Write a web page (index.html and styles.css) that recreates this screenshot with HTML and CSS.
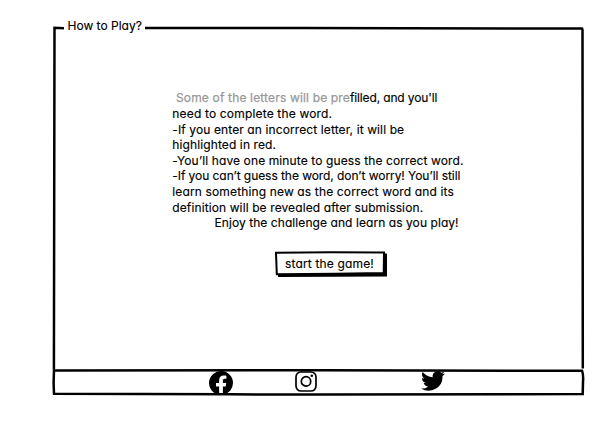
FILE: index.html
```
<!DOCTYPE html>
<html lang="en">
<head>
<meta charset="utf-8">
<title>How to Play?</title>
<link rel="stylesheet" href="styles.css">
</head>
<body>
<div class="window">
  <svg class="outline" viewBox="0 0 610 430" aria-hidden="true">
    <path d="M64 28.2L54.5 27.8L53.9 369.5M145 28L300 28.1L582 28.6Q582.7 28.6 582.5 34L582.8 368.5"/>
    <path d="M54 370.5L320 370.2L582 370.8Q583.6 374 583 382L582.7 394L320 394.6L230 394.3L54 393.8L53.6 383Z"/>
  </svg>
  <h1 class="title">How to Play?</h1>
  <main class="content">
    <div class="rules">
      <p class="l1"><span class="muted">Some of the letters will be pre</span>filled, and you'll</p>
      <p class="l2">need to complete the word.</p>
      <p class="l3">-If you enter an incorrect letter, it will be</p>
      <p class="l4">highlighted in red.</p>
      <p class="l5">-You’ll have one minute to guess the correct word.</p>
      <p class="l6">-If you can’t guess the word, don’t worry! You’ll still</p>
      <p class="l7">learn something new as the correct word and its</p>
      <p class="l8">definition will be revealed after submission.</p>
      <p class="l9">Enjoy the challenge and learn as you play!</p>
    </div>
    <button class="start" type="button">
      <svg class="start-shape" viewBox="0 0 113 27" aria-hidden="true">
        <path class="shadow" d="M3 3L112 2.5L112 25.5L3 26Z"/>
        <path class="face" d="M1 1.8L55 1.2L109 1.5L108.7 22L60 22.8L1.8 23.2Z"/>
      </svg>
      <span>start the game!</span>
    </button>
  </main>
  <footer class="social">
    <svg class="facebook" viewBox="0 0 24 24"><path d="M24 12A12 12 0 1 0 10.1 23.9V15.5H7V12h3.1V9.3c0-3 1.8-4.7 4.6-4.7 1.3 0 2.7.2 2.7.2v3h-1.5c-1.5 0-2 .9-2 1.9V12h3.3l-.5 3.5h-2.8v8.4A12 12 0 0 0 24 12Z"/></svg>
    <svg class="instagram" viewBox="0 0 22 22"><rect x="1" y="1" width="20" height="19" rx="5"/><circle cx="11" cy="10.4" r="4.7"/><circle class="dot" cx="16.8" cy="4.8" r="1.3"/></svg>
    <svg class="twitter" viewBox="0 0 24 20"><path d="M24 2.4a10 10 0 0 1-2.8.8A5 5 0 0 0 23.3.5a10 10 0 0 1-3.1 1.2A4.9 4.9 0 0 0 11.8 6.2 14 14 0 0 1 1.7 1a4.9 4.9 0 0 0 1.5 6.6A5 5 0 0 1 1 7v.1a4.9 4.9 0 0 0 3.9 4.8 5 5 0 0 1-2.2.1 4.9 4.9 0 0 0 4.6 3.4A10 10 0 0 1 0 17.5 14 14 0 0 0 21.5 5A10 10 0 0 0 24 2.4Z"/></svg>
  </footer>
</div>
</body>
</html>
```
FILE: styles.css
```
* { box-sizing: border-box; }
body {
  margin: 0;
  background: #fff;
  color: #000;
  font: 12px/15.6px Inter, "Liberation Sans", sans-serif;
  font-feature-settings: "cv11";
  -webkit-text-stroke: 0.15px currentColor;
}
.window {
  position: relative;
  width: 610px;
  height: 430px;
  padding: 18px 26px 35px 53px;
  display: flex;
  flex-direction: column;
}
.outline {
  position: absolute;
  inset: 0;
  width: 610px;
  height: 430px;
  fill: none;
  stroke: #000;
  stroke-width: 2.5;
}
.title {
  margin: 0 0 0 14.5px;
  font-size: 12px;
  font-weight: 400;
  line-height: 16px;
  letter-spacing: 0;
}
.content {
  height: 335px;
  padding: 56.4px 0 0 119.3px;
  display: flex;
  flex-direction: column;
  align-items: flex-start;
}
.rules p { margin: 0; white-space: nowrap; letter-spacing: 0.11px; }
.rules .l1 { padding-left: 3.7px; letter-spacing: -0.14px; }
.rules .l2 { letter-spacing: 0.17px; }
.rules .l6 { letter-spacing: -0.06px; }
.rules .l7 { letter-spacing: 0.14px; }
.rules .l9 { padding-left: 42.2px; letter-spacing: 0.07px; }
.muted { color: #999; letter-spacing: 0.16px; -webkit-text-stroke: 0.25px #999; }
.start {
  position: relative;
  width: 113px;
  height: 27px;
  margin: 20.2px 0 0 102.7px;
  padding: 0 4px 1.4px 0;
  border: 0;
  background: none;
  color: inherit;
  font: inherit;
  font-feature-settings: inherit;
  letter-spacing: 0.15px;
}
.start span { position: relative; white-space: nowrap; }
.start-shape { position: absolute; inset: 0; width: 113px; height: 27px; }
.shadow { fill: #000; }
.face { fill: #fff; stroke: #000; stroke-width: 2; }
.social {
  height: 26px;
  padding: 2px 0 0 156px;
  display: flex;
  align-items: flex-start;
}
.social svg { display: block; }
.facebook { width: 24px; height: 24px; }
.instagram { width: 22px; height: 22px; margin-left: 62px; fill: none; stroke: #000; stroke-width: 1.7; }
.instagram .dot { fill: #000; stroke: none; }
.twitter { width: 24px; height: 20px; margin-left: 104px; }
```
